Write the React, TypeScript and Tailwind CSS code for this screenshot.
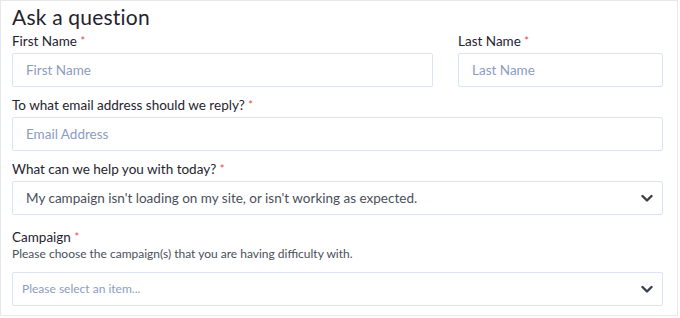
import React from "react";

function Chevron() {
  return (
    <svg width="12" height="9" viewBox="0 0 12 9" className="shrink-0">
      <path d="M1.5 2 L6 6.5 L10.5 2" fill="none" stroke="#3b3f48" strokeWidth="2.4" strokeLinecap="round" strokeLinejoin="round" />
    </svg>
  );
}

function Label({ children }: { children: React.ReactNode }) {
  return (
    <div className="text-[13.5px] leading-[16px] text-[#1f2430]">
      {children} <span className="text-[#e5484d] text-[11px] align-top">*</span>
    </div>
  );
}

export default function App() {
  return (
    <div className="w-[680px] h-[318px] bg-white" style={{ fontFamily: "Lato, 'Noto Sans', sans-serif" }}>
      <div className="w-[678px] h-[316px] border border-[#e6e8ec] pl-[11px] pr-[14px] pt-[3px]">
        <div className="text-[21px] leading-[26px] text-[#1f2430] tracking-[0.2px]">Ask a question</div>
        <div className="flex gap-[25px] mt-[3px]">
          <div className="w-[421px] flex flex-col gap-[4px]">
            <Label>First Name</Label>
            <div className="h-[34px] border border-[#dbe4f2] rounded-[2px] flex items-center px-[13px] text-[13.5px] text-[#8b9dc1]">First Name</div>
          </div>
          <div className="flex-1 flex flex-col gap-[4px]">
            <Label>Last Name</Label>
            <div className="h-[34px] border border-[#dbe4f2] rounded-[2px] flex items-center px-[13px] text-[13.5px] text-[#8b9dc1]">Last Name</div>
          </div>
        </div>
        <div className="flex flex-col gap-[4px] mt-[10px]">
          <Label>To what email address should we reply?</Label>
          <div className="h-[34px] border border-[#dbe4f2] rounded-[2px] flex items-center px-[13px] text-[13.5px] text-[#8b9dc1]">Email Address</div>
        </div>
        <div className="flex flex-col gap-[4px] mt-[10px]">
          <Label>What can we help you with today?</Label>
          <div className="h-[34px] border border-[#dbe4f2] rounded-[2px] flex items-center justify-between pl-[13px] pr-[9px] text-[13.5px] text-[#4a4f5a]">
            <span>My campaign isn't loading on my site, or isn't working as expected.</span>
            <Chevron />
          </div>
        </div>
        <div className="flex flex-col mt-[14px]">
          <Label>Campaign</Label>
          <div className="text-[12px] leading-[14px] text-[#4a4f5a] mt-[2px]">Please choose the campaign(s) that you are having difficulty with.</div>
          <div className="h-[34px] mt-[11px] border border-[#dbe4f2] rounded-[2px] flex items-center justify-between pl-[9px] pr-[9px] text-[12px] text-[#8b9dc1]">
            <span>Please select an item...</span>
            <Chevron />
          </div>
        </div>
      </div>
    </div>
  );
}
